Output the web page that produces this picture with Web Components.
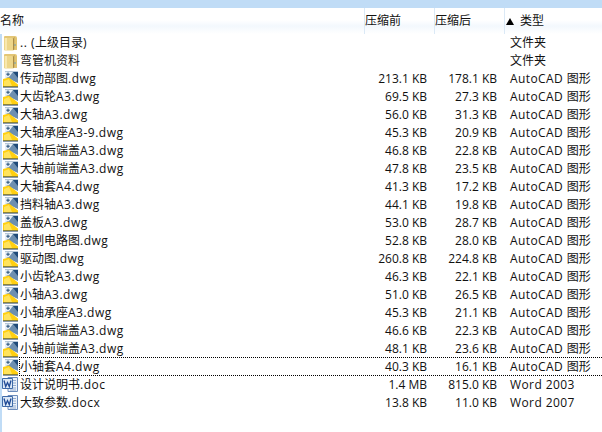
<!DOCTYPE html>
<html>
<head>
<meta charset="utf-8">
<title>files</title>
<style>
html, body { margin: 0; height: 100%; background: #fff; overflow: hidden; }
body { font-family: "Open Sans", "Noto Sans CJK SC", sans-serif; font-size: 12px; color: #111; }
</style>
</head>
<body>
<file-list></file-list>
<script>
const ICONS = {
  folder: `<svg width="16" height="17" viewBox="0 0 16 17">
    <path d="M2 2 Q2 1 3 1 H13 Q15 1 15 3 V15 H2Z" fill="#e3c676"/>
    <path d="M2 3 H10 L11 4 V15.5 H3 Q2 15.5 2 14.5Z" fill="#edd68a"/>
    <path d="M3 3 H5 V15 H3Z" fill="#f8e8b0"/>
    <path d="M11 3.5 L12.5 2 V14 L11 15.5Z" fill="#a98c48"/>
    <path d="M12.5 3 H15 V14 H12.5Z" fill="#e2c470"/>
    <path d="M12.5 9 H13.5 V11 H12.5Z" fill="#6f9fb0"/>
  </svg>`,
  dwg: `<svg width="17" height="17" viewBox="0 0 17 17">
    <path d="M3 0.5 H16 V12 L3 6Z" fill="#6d8fb0"/>
    <path d="M3 1 H11 L7 6 L3 7Z" fill="#e6eef6"/>
    <path d="M6 1.5 V5 M4.3 3.2 H7.8" stroke="#24507a" stroke-width="1"/>
    <path d="M11 1 H16 V7 Z" fill="#1f4a78"/>
    <path d="M1 16 V8 L7 6.5 L16 13.5 V16Z" fill="#ffcf10"/>
    <path d="M2 15 V10 L7 8 L10 15Z" fill="#ffe35c"/>
    <path d="M1 16 H16" stroke="#17375e" stroke-width="1"/>
  </svg>`,
  doc: `<svg width="17" height="17" viewBox="0 0 17 17">
    <path d="M6 0.5 H15.5 V14.5 H6Z" fill="#eaf1f9" stroke="#6c8cbc"/>
    <path d="M11 3.5 H14 M11 6 H14 M11 8.5 H14 M8 11 H14 M8 13 H14" stroke="#93abcf"/>
    <path d="M0.5 1.5 H10.5 V11.5 H0.5Z" fill="#dce8f6" stroke="#3e6aa8"/>
    <path d="M2 3.5 L3.7 9.5 L5.5 5.5 L7.3 9.5 L9 3.5" fill="none" stroke="#1f4a96" stroke-width="1.3"/>
  </svg>`
};

// latin runs are a little wider in the original font
const latin = s => s.replace(/[\x20-\x7e]+/g, m => `<span class="l">${m}</span>`);

class FileRow extends HTMLElement {
  connectedCallback() {
    const a = n => this.getAttribute(n) || '';
    const focus = this.hasAttribute('focused');
    this.attachShadow({ mode: 'open' }).innerHTML = `
    <style>
      :host { display: block; height: 18px; }
      .row { display: grid; grid-template-columns: 19px 1fr; height: 18px; line-height: 18px; white-space: nowrap; }
      .icon { display: flex; align-items: center; padding-left: 2px; }
      .cols { display: grid; grid-template-columns: 345px 70px 70px 1fr; box-sizing: border-box; height: 18px; }
      .cols.focus { border: 1px dotted #000; border-right: 0; grid-template-columns: 344px 70px 70px 1fr; line-height: 16px; margin-top: -1px; height: 19px; padding-top: 1px; }
      .name { margin-left: 1px; }
      .focus .name { margin-left: 0; }
      .num { text-align: right; padding-right: 7px; }
      .type { padding-left: 6px; }
      .name .l { letter-spacing: .5px; }
      .type .l { letter-spacing: .4px; }
    </style>
    <div class="row">
      <div class="icon">${ICONS[a('icon')]}</div>
      <div class="cols${focus ? ' focus' : ''}">
        <div class="name">${latin(a('name'))}</div>
        <div class="num">${a('before')}</div>
        <div class="num">${a('after')}</div>
        <div class="type">${latin(a('type'))}</div>
      </div>
    </div>`;
  }
}
customElements.define('file-row', FileRow);

class ListHeader extends HTMLElement {
  connectedCallback() {
    this.attachShadow({ mode: 'open' }).innerHTML = `
    <style>
      :host { display: block; height: 26px; background: linear-gradient(#fff 0, #fff 12px, #f3f8fd 18px, #fff 26px); }
      .row { display: grid; grid-template-columns: 364px 70px 70px 1fr; height: 22px; line-height: 26px; }
      .cell { border-left: 1px solid #dbe9f6; }
      .cell:first-child { border-left: 0; }
      .sort { display: inline-block; width: 0; height: 0; border: 4px solid transparent; border-top: 0; border-bottom: 7px solid #000; margin: 0 6px 0 1px; }
    </style>
    <div class="row">
      <div class="cell">名称</div>
      <div class="cell">压缩前</div>
      <div class="cell">压缩后</div>
      <div class="cell"><span class="sort"></span>类型</div>
    </div>`;
  }
}
customElements.define('list-header', ListHeader);

const AC = 'AutoCAD 图形';
const FILES = [
  ['folder', '.. (上级目录)', '', '', '文件夹'],
  ['folder', '弯管机资料', '', '', '文件夹'],
  ['dwg', '传动部图.dwg', '213.1 KB', '178.1 KB', AC],
  ['dwg', '大齿轮A3.dwg', '69.5 KB', '27.3 KB', AC],
  ['dwg', '大轴A3.dwg', '56.0 KB', '31.3 KB', AC],
  ['dwg', '大轴承座A3-9.dwg', '45.3 KB', '20.9 KB', AC],
  ['dwg', '大轴后端盖A3.dwg', '46.8 KB', '22.8 KB', AC],
  ['dwg', '大轴前端盖A3.dwg', '47.8 KB', '23.5 KB', AC],
  ['dwg', '大轴套A4.dwg', '41.3 KB', '17.2 KB', AC],
  ['dwg', '挡料轴A3.dwg', '44.1 KB', '19.8 KB', AC],
  ['dwg', '盖板A3.dwg', '53.0 KB', '28.7 KB', AC],
  ['dwg', '控制电路图.dwg', '52.8 KB', '28.0 KB', AC],
  ['dwg', '驱动图.dwg', '260.8 KB', '224.8 KB', AC],
  ['dwg', '小齿轮A3.dwg', '46.3 KB', '22.1 KB', AC],
  ['dwg', '小轴A3.dwg', '51.0 KB', '26.5 KB', AC],
  ['dwg', '小轴承座A3.dwg', '45.3 KB', '21.1 KB', AC],
  ['dwg', '小轴后端盖A3.dwg', '46.6 KB', '22.3 KB', AC],
  ['dwg', '小轴前端盖A3.dwg', '48.1 KB', '23.6 KB', AC],
  ['dwg', '小轴套A4.dwg', '40.3 KB', '16.1 KB', AC],
  ['doc', '设计说明书.doc', '1.4 MB', '815.0 KB', 'Word 2003'],
  ['doc', '大致参数.docx', '13.8 KB', '11.0 KB', 'Word 2007']
];

class FileList extends HTMLElement {
  connectedCallback() {
    const root = this.attachShadow({ mode: 'open' });
    root.innerHTML = `
    <style>
      :host { display: block; width: 602px; height: 432px; background: #fff; }
      .top { height: 8px; background: #c0dcf6; }
      .body { border-left: 2px solid #c0dcf6; height: 424px; box-sizing: border-box; }
      .rows { margin-left: -2px; }
    </style>
    <div class="top"></div>
    <div class="body">
      <div class="rows">
        <list-header></list-header>
        <div id="rows"></div>
      </div>
    </div>`;
    const rows = root.getElementById('rows');
    FILES.forEach((f, i) => {
      const r = document.createElement('file-row');
      ['icon', 'name', 'before', 'after', 'type'].forEach((k, j) => r.setAttribute(k, f[j]));
      if (i == 18) r.setAttribute('focused', '');
      rows.appendChild(r);
    });
  }
}
customElements.define('file-list', FileList);
</script>
</body>
</html>
